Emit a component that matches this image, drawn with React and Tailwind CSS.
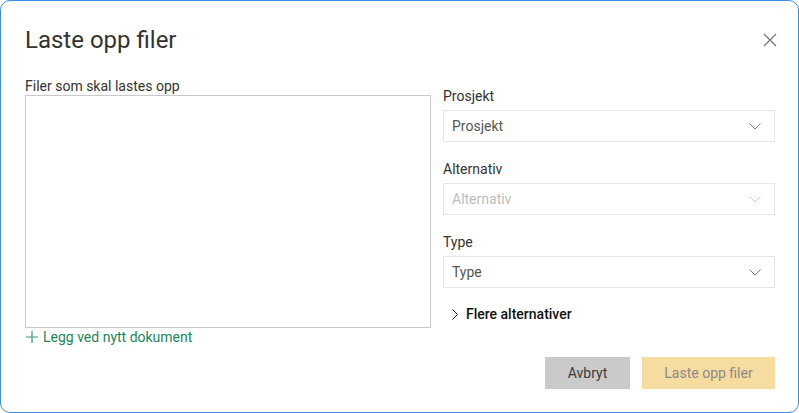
import React from "react";

const Chevron = ({ color = "#6b6b6b" }) => (
  <svg width="12" height="7" viewBox="0 0 12 7" fill="none">
    <path d="M0.5 0.5l5.5 5.5L11.5 0.5" stroke={color} strokeWidth="1" />
  </svg>
);

const Select = ({ label, value, disabled }) => (
  <div className="flex flex-col">
    <div className="text-[14px] leading-[18px] text-[#333] mb-[5px]">{label}</div>
    <div className="h-[32px] border border-[#e6e6e6] flex items-center justify-between pl-[8px] pr-[13px]">
      <span className={"text-[14px] " + (disabled ? "text-[#bdbdbd]" : "text-[#555]")}>{value}</span>
      <Chevron color={disabled ? "#d0d0d0" : "#7a7a7a"} />
    </div>
  </div>
);

export default function App() {
  return (
    <div
      className="w-[799px] h-[413px] bg-white border border-[#3a8ee6] rounded-[10px] flex flex-col pl-[24px] pr-[23px] pt-[23px]"
      style={{ fontFamily: 'Roboto, sans-serif' }}
    >
      <div className="flex items-center justify-between h-[32px]">
        <h1 className="text-[24px] leading-[32px] text-[#333]">Laste opp filer</h1>
        <svg width="14" height="14" viewBox="0 0 14 14" className="mr-[-2px]">
          <path d="M1 1l12 12M13 1L1 13" stroke="#7a7a7a" strokeWidth="1.3" />
        </svg>
      </div>
      <div className="flex gap-[12px] mt-[21px]">
        <div className="w-[406px] flex flex-col">
          <div className="text-[14px] leading-[18px] text-[#333]">Filer som skal lastes opp</div>
          <div className="h-[233px] border border-[#c9c9c9]"></div>
          <div className="flex items-center gap-[4px] text-[14px] leading-[18px] text-[#17875a]">
            <svg width="14" height="14" viewBox="0 0 14 14">
              <path d="M7 1v12M1 7h12" stroke="#3a9a7a" strokeWidth="1.2" />
            </svg>
            <span>Legg ved nytt dokument</span>
          </div>
        </div>
        <div className="flex-1 flex flex-col pt-[10px]">
          <div className="flex flex-col gap-[18px]">
            <Select label="Prosjekt" value="Prosjekt" />
            <Select label="Alternativ" value="Alternativ" disabled />
            <Select label="Type" value="Type" />
          </div>
          <div className="flex items-center gap-[8px] mt-[17px] pl-[9px] h-[18px]">
            <svg width="6" height="11" viewBox="0 0 6 11">
              <path d="M0.5 0.5l5 5-5 5" stroke="#222" strokeWidth="1" fill="none" />
            </svg>
            <span className="text-[14px] font-medium text-[#111]">Flere alternativer</span>
          </div>
          <div className="flex justify-end gap-[12px] mt-[34px]">
            <button className="w-[85px] h-[32px] bg-[#cacaca] text-[14px] font-normal text-[#3a3a3a]">Avbryt</button>
            <button className="w-[133px] h-[32px] bg-[#f7dc9f] text-[14px] font-normal text-[#8a8a8a]">Laste opp filer</button>
          </div>
        </div>
      </div>
    </div>
  );
}
